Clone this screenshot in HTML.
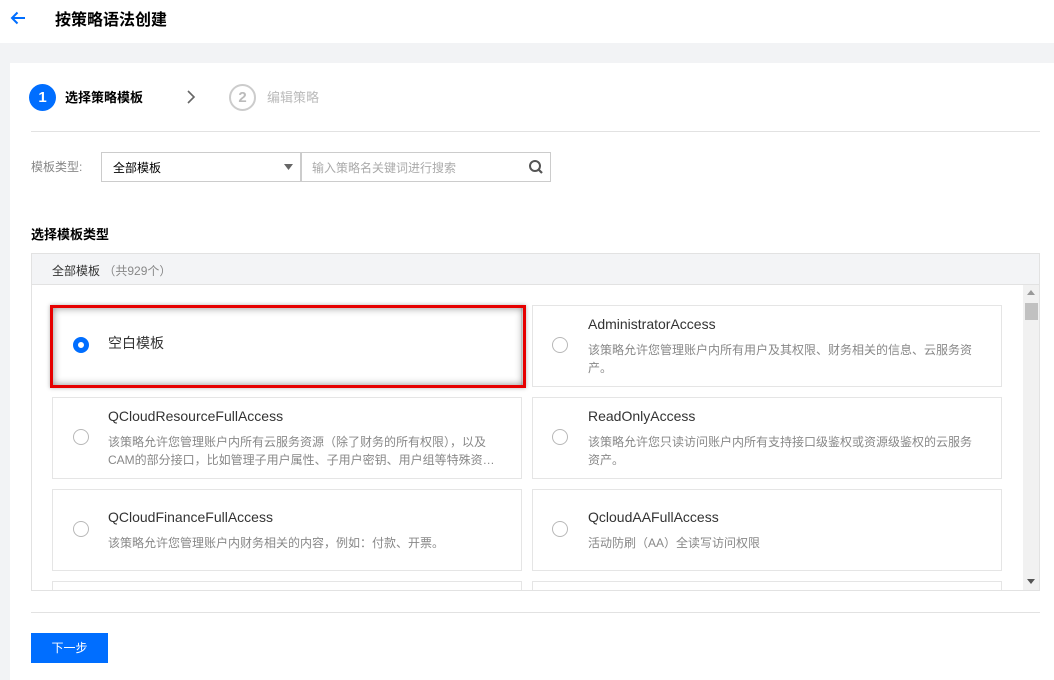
<!DOCTYPE html>
<html><head><meta charset="utf-8"><style>
*{box-sizing:border-box;margin:0;padding:0}
body{width:1054px;height:680px;overflow:hidden;background:#f2f3f5;font-family:"Liberation Sans","Noto Sans CJK SC",sans-serif;font-size:12px;color:#000;position:relative}
.abs{position:absolute}
.hdr{left:0;top:0;width:1054px;height:43px;background:#fff}
.card{left:10px;top:63px;width:1044px;height:617px;background:#fff}
.radio{width:16px;height:16px;border:1px solid #b8b8b8;border-radius:50%;background:#fff}
.t{font-size:14px;color:#333}
.d{font-size:12px;color:#888;line-height:18px}
.box{border:1px solid #e5e5e5;background:#fff}
</style></head><body>
<div class="abs hdr">
<svg class="abs" style="left:9px;top:9px" width="18" height="18" viewBox="0 0 18 18"><path d="M16 9H3M8.5 3.5L3 9l5.5 5.5" stroke="#006eff" stroke-width="2" fill="none"/></svg>
<div class="abs" style="left:55px;top:6px;font-size:16px;font-weight:bold;color:#000">按策略语法创建</div>
</div>
<div class="abs card"></div>
<div class="abs" style="left:29px;top:84px;width:27px;height:27px;border-radius:50%;background:#006eff;color:#fff;font-weight:bold;font-size:15px;text-align:center;line-height:27px">1</div>
<div class="abs" style="left:65px;top:87px;font-size:13px;font-weight:bold;color:#000">选择策略模板</div>
<svg class="abs" style="left:184px;top:89px" width="14" height="16"><path d="M4 2l6 6-6 6" stroke="#666" stroke-width="1.6" fill="none"/></svg>
<div class="abs" style="left:229px;top:84px;width:27px;height:27px;border-radius:50%;border:2px solid #ccc;color:#bbb;font-weight:bold;font-size:15px;text-align:center;line-height:23px">2</div>
<div class="abs" style="left:267px;top:87px;font-size:13px;color:#bbb">编辑策略</div>
<div class="abs" style="left:31px;top:131px;width:1009px;height:1px;background:#e2e2e2"></div>
<div class="abs" style="left:31px;top:158px;color:#888">模板类型:</div>
<div class="abs" style="left:101px;top:152px;width:200px;height:30px;border:1px solid #ccc;padding:6px 0 0 11px;color:#000">全部模板
<svg class="abs" style="left:182px;top:11px" width="9" height="6"><path d="M0 0h9L4.5 6z" fill="#666"/></svg></div>
<div class="abs" style="left:301px;top:152px;width:250px;height:30px;border:1px solid #ccc;padding:6px 0 0 10px;color:#aaa">输入策略名关键词进行搜索
<svg class="abs" style="left:226px;top:6px" width="16" height="16"><circle cx="7" cy="7" r="5" stroke="#555" stroke-width="2" fill="none"/><path d="M10.5 10.5l3.5 3.5" stroke="#555" stroke-width="2.2"/></svg></div>
<div class="abs" style="left:31px;top:224px;font-size:13px;font-weight:bold;color:#000">选择模板类型</div>
<div class="abs" style="left:31px;top:253px;width:1009px;height:338px;border:1px solid #e2e2e2;background:#fff;overflow:hidden">
<div class="abs" style="left:0;top:0;width:1009px;height:31px;background:#f3f4f6;border-bottom:1px solid #e2e2e2;padding:8px 0 0 20px;color:#333">全部模板 <span style="color:#888">（共929个）</span></div>
<div class="abs" style="left:991px;top:31px;width:17px;height:306px;background:#f1f1f1"></div>
<svg class="abs" style="left:995px;top:36px" width="8" height="5"><path d="M0 5h8L4 0z" fill="#999"/></svg>
<div class="abs" style="left:993px;top:49px;width:13px;height:17px;background:#c1c1c1"></div>
<svg class="abs" style="left:995px;top:325px" width="8" height="5"><path d="M0 0h8L4 5z" fill="#555"/></svg>
</div>
<!-- cards -->
<div class="abs box" style="left:52px;top:305px;width:470px;height:82px"></div>
<div class="abs" style="left:50px;top:305px;width:476px;height:83px;border:3px solid #e60000;box-shadow:inset 0 0 8px rgba(0,0,0,.45),0 0 4px rgba(0,0,0,.3)"></div>
<div class="abs radio" style="left:73px;top:337px;border:5px solid #006eff"></div>
<div class="abs t" style="left:108px;top:333px">空白模板</div>

<div class="abs box" style="left:532px;top:305px;width:470px;height:82px"></div>
<div class="abs radio" style="left:552px;top:337px"></div>
<div class="abs t" style="left:588px;top:316px">AdministratorAccess</div>
<div class="abs d" style="left:588px;top:341px;width:395px">该策略允许您管理账户内所有用户及其权限、财务相关的信息、云服务资产。</div>

<div class="abs box" style="left:52px;top:397px;width:470px;height:82px"></div>
<div class="abs radio" style="left:73px;top:429px"></div>
<div class="abs t" style="left:108px;top:408px">QCloudResourceFullAccess</div>
<div class="abs d" style="left:108px;top:433px;width:392px;height:36px;overflow:hidden">该策略允许您管理账户内所有云服务资源（除了财务的所有权限），以及CAM的部分接口，比如管理子用户属性、子用户密钥、用户组等特殊资…</div>

<div class="abs box" style="left:532px;top:397px;width:470px;height:82px"></div>
<div class="abs radio" style="left:552px;top:429px"></div>
<div class="abs t" style="left:588px;top:408px">ReadOnlyAccess</div>
<div class="abs d" style="left:588px;top:433px;width:395px">该策略允许您只读访问账户内所有支持接口级鉴权或资源级鉴权的云服务资产。</div>

<div class="abs box" style="left:52px;top:489px;width:470px;height:82px"></div>
<div class="abs radio" style="left:73px;top:521px"></div>
<div class="abs t" style="left:108px;top:509px">QCloudFinanceFullAccess</div>
<div class="abs d" style="left:108px;top:534px">该策略允许您管理账户内财务相关的内容，例如：付款、开票。</div>

<div class="abs box" style="left:532px;top:489px;width:470px;height:82px"></div>
<div class="abs radio" style="left:552px;top:521px"></div>
<div class="abs t" style="left:588px;top:509px">QcloudAAFullAccess</div>
<div class="abs d" style="left:588px;top:534px">活动防刷（AA）全读写访问权限</div>

<div class="abs box" style="left:52px;top:581px;width:470px;height:9px;border-bottom:none"></div>
<div class="abs box" style="left:532px;top:581px;width:470px;height:9px;border-bottom:none"></div>

<div class="abs" style="left:31px;top:612px;width:1009px;height:1px;background:#e2e2e2"></div>
<div class="abs" style="left:31px;top:633px;width:77px;height:30px;background:#006eff;color:#fff;text-align:center;line-height:30px">下一步</div>
</body></html>
